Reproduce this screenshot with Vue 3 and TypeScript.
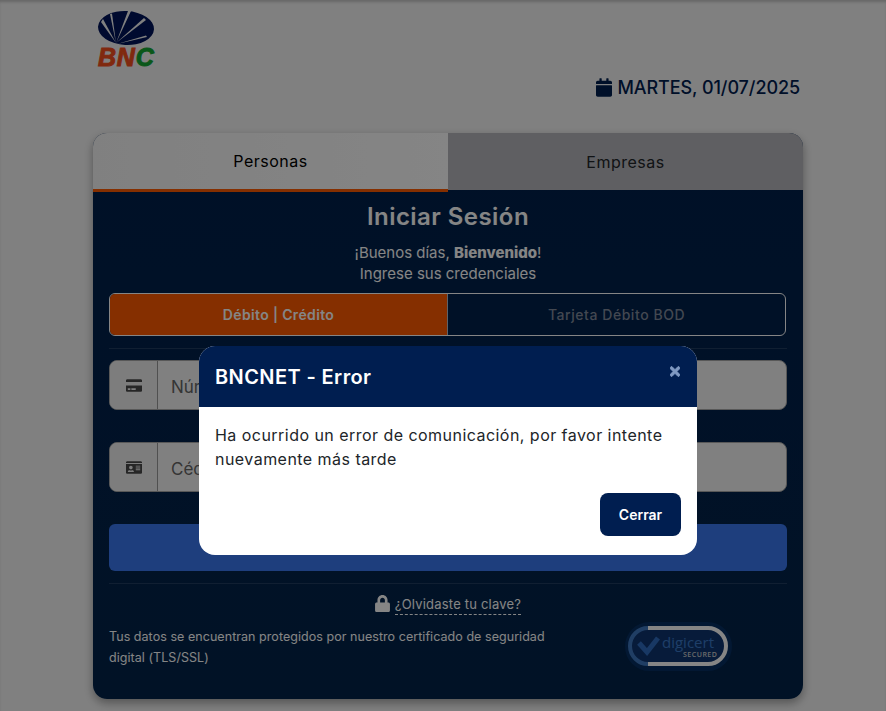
<script setup lang="ts">
const rays: string[] = [
  '18,33 3,12 5,9',
  '18,33 12,4 14,3.5',
  '18,33 30,1 33,1',
  '18,33 46,8 48,10',
  '19,34 48,25.5 49,27',
]
</script>

<template>
  <div class="page">
    <header class="top">
      <div class="logo">
        <svg class="logo-mark" width="58" height="36" viewBox="0 0 58 36">
          <ellipse cx="28" cy="18" rx="28" ry="17" fill="#00145a" transform="rotate(3 28 18)" />
          <polygon v-for="r in rays" :key="r" :points="r" fill="#f6f6f6" />
        </svg>
        <div class="logo-text"><span class="red">BN</span><span class="green">C</span></div>
      </div>
      <div class="date">
        <svg class="ico-cal" viewBox="0 0 448 512"><path d="M12 192h424c6.6 0 12 5.4 12 12v260c0 26.5-21.5 48-48 48H48c-26.5 0-48-21.5-48-48V204c0-6.6 5.4-12 12-12zm436-44v-36c0-26.5-21.5-48-48-48h-48V12c0-6.6-5.4-12-12-12h-40c-6.6 0-12 5.4-12 12v52H160V12c0-6.6-5.4-12-12-12h-40c-6.6 0-12 5.4-12 12v52H48C21.5 64 0 85.5 0 112v36c0 6.6 5.4 12 12 12h424c6.6 0 12-5.4 12-12z" /></svg>
        <span>MARTES, 01/07/2025</span>
      </div>
    </header>

    <main class="card">
      <div class="tabs">
        <div class="tab active">Personas</div>
        <div class="tab">Empresas</div>
      </div>
      <div class="card-body">
        <h1>Iniciar Sesión</h1>
        <p class="greet">¡Buenos días, <b>Bienvenido</b>!<br />Ingrese sus credenciales</p>
        <div class="segment">
          <div class="seg on">Débito | Crédito</div>
          <div class="seg">Tarjeta Débito BOD</div>
        </div>
        <hr />
        <div class="field">
          <div class="addon">
            <svg class="ico-field" viewBox="0 0 576 512"><path d="M0 432c0 26.5 21.5 48 48 48h480c26.5 0 48-21.5 48-48V256H0v176zm192-68c0-6.6 5.4-12 12-12h136c6.6 0 12 5.4 12 12v40c0 6.6-5.4 12-12 12H204c-6.6 0-12-5.4-12-12v-40zm-128 0c0-6.6 5.4-12 12-12h72c6.6 0 12 5.4 12 12v40c0 6.6-5.4 12-12 12H76c-6.6 0-12-5.4-12-12v-40zM576 80v48H0V80c0-26.5 21.5-48 48-48h480c26.5 0 48 21.5 48 48z" /></svg>
          </div>
          <div class="ph">Número de Tarjeta</div>
        </div>
        <div class="field second">
          <div class="addon">
            <svg class="ico-field" viewBox="0 0 576 512"><path d="M528 32H48C21.5 32 0 53.5 0 80v16h576V80c0-26.5-21.5-48-48-48zM0 432c0 26.5 21.5 48 48 48h480c26.5 0 48-21.5 48-48V128H0v304zm352-232c0-4.4 3.6-8 8-8h144c4.4 0 8 3.6 8 8v16c0 4.4-3.6 8-8 8H360c-4.4 0-8-3.6-8-8v-16zm0 64c0-4.4 3.6-8 8-8h144c4.4 0 8 3.6 8 8v16c0 4.4-3.6 8-8 8H360c-4.4 0-8-3.6-8-8v-16zm0 64c0-4.4 3.6-8 8-8h144c4.4 0 8 3.6 8 8v16c0 4.4-3.6 8-8 8H360c-4.4 0-8-3.6-8-8v-16zM176 192c35.3 0 64 28.7 64 64s-28.7 64-64 64-64-28.7-64-64 28.7-64 64-64zM67.1 396.2C75.5 370.5 99.6 352 128 352h8.2c12.3 5.1 25.7 8 39.8 8s27.6-2.9 39.8-8h8.2c28.4 0 52.5 18.5 60.9 44.2 3.2 9.9-5.2 19.8-15.6 19.8H82.7c-10.4 0-18.8-10-15.6-19.8z" /></svg>
          </div>
          <div class="ph">Cédula de Identidad</div>
        </div>
        <button class="submit">Entrar</button>
        <hr class="after-submit" />
        <div class="forgot">
          <svg class="ico-lock" viewBox="0 0 448 512"><path d="M400 224h-24v-72C376 68.2 307.8 0 224 0S72 68.2 72 152v72H48c-26.5 0-48 21.5-48 48v192c0 26.5 21.5 48 48 48h352c26.5 0 48-21.5 48-48V272c0-26.5-21.5-48-48-48zm-104 0H152v-72c0-39.7 32.3-72 72-72s72 32.3 72 72v72z" /></svg>
          <a>¿Olvidaste tu clave?</a>
        </div>
        <div class="foot">
          <p>Tus datos se encuentran protegidos por nuestro certificado de seguridad digital (TLS/SSL)</p>
          <svg class="digicert" width="107" height="49" viewBox="0 0 107 49">
            <rect x="0" y="0" width="107" height="49" rx="24.5" fill="#0a3a7a" opacity="0.5" />
            <path d="M23 6 H83 A18 18 0 0 1 83 42 H23" fill="#0e3570" stroke="#fff" stroke-width="4" />
            <path d="M23 6 A18 18 0 0 0 23 42" fill="#0e3570" stroke="#3f78c0" stroke-width="4" />
            <path d="M14 21 L22 30 L33 16" fill="none" stroke="#2f6cc0" stroke-width="5" />
            <text x="37" y="26" class="dc-name">digicert</text>
            <text x="58" y="35" class="dc-sec">SECURED</text>
          </svg>
        </div>
      </div>
    </main>

    <div class="backdrop"></div>
    <div class="modal-layer">
      <div class="modal">
        <div class="modal-head">
          <h2>BNCNET - Error</h2>
          <svg class="ico-close" viewBox="0 0 352 512"><path d="M242.72 256l100.07-100.07c12.28-12.28 12.28-32.19 0-44.48l-22.24-22.24c-12.28-12.28-32.19-12.28-44.48 0L176 189.28 75.93 89.21c-12.28-12.28-32.19-12.28-44.48 0L9.21 111.45c-12.28 12.28-12.28 32.19 0 44.48L109.28 256 9.21 356.07c-12.28 12.28-12.28 32.19 0 44.48l22.24 22.24c12.28 12.28 32.2 12.28 44.48 0L176 322.72l100.07 100.07c12.28 12.28 32.2 12.28 44.48 0l22.24-22.24c12.28-12.28 12.28-32.19 0-44.48L242.72 256z" /></svg>
        </div>
        <div class="modal-body">Ha ocurrido un error de comunicación, por favor intente nuevamente más tarde</div>
        <div class="modal-foot"><button class="close-btn">Cerrar</button></div>
      </div>
    </div>
  </div>
</template>

<style scoped>
.page {
  height: 711px;
  overflow: hidden;
  position: relative;
  background: #f6f6f6;
  font-family: Inter, "Open Sans", sans-serif;
  color: #212529;
  padding-left: 93px;
  box-sizing: border-box;
}

.top {
  width: 710px;
  height: 133px;
  display: flex;
  justify-content: space-between;
  align-items: flex-start;
  box-sizing: border-box;
  padding: 10px 3px 0 5px;
}

.logo { width: 58px; }
.logo-mark { display: block; }
.logo-text {
  font-family: "Liberation Sans", sans-serif;
  font-weight: 700;
  font-style: italic;
  font-size: 25px;
  line-height: 22px;
  letter-spacing: 0.8px;
  -webkit-text-stroke: 1px currentColor;
}
.red { color: #f5501e; }
.green { color: #14a832; }

.date {
  margin-top: 67px;
  display: flex;
  align-items: center;
  gap: 5px;
  font-size: 18px;
  line-height: 20px;
  font-weight: 500;
  letter-spacing: -0.08px;
  color: #002050;
}
.ico-cal { width: 16px; height: 19px; fill: #002050; }
.date span { padding-top: 1px; }

.card {
  width: 710px;
  height: 566px;
  border-radius: 14px;
  overflow: hidden;
  background: linear-gradient(#00204c, #03244a);
  box-shadow: 0 4px 10px rgba(0, 0, 0, 0.35);
}

.tabs { display: flex; height: 57px; align-items: flex-start; }
.tab {
  flex: 1;
  height: 57px;
  display: flex;
  align-items: center;
  justify-content: center;
  background: #b6b7bd;
  color: #212529;
  font-size: 16px;
  font-weight: 400;
  letter-spacing: 0.5px;
  box-sizing: border-box;
}
.tab.active {
  height: 59px;
  position: relative;
  background: linear-gradient(90deg, #f6f6f6, #fff);
  color: #000;
  border-bottom: 3px solid #ff5a00;
}

.card-body { padding: 0 16px; color: #fff; }

h1 {
  margin: 0;
  padding-top: 12px;
  font-size: 24px;
  line-height: 30px;
  font-weight: 600;
  letter-spacing: 0.45px;
  text-align: center;
}

.greet {
  margin: 10px 0 0;
  font-size: 15px;
  line-height: 21px;
  text-align: center;
  letter-spacing: 0;
}
.greet b { font-weight: 800; }

.segment {
  margin-top: 9px;
  display: flex;
  height: 43px;
  border: 1px solid #fff;
  border-radius: 6px;
  overflow: hidden;
  width: 677px;
  box-sizing: border-box;
}
.seg {
  flex: 1;
  display: flex;
  align-items: center;
  justify-content: center;
  font-size: 14px;
  font-weight: 500;
  color: #808a9c;
  letter-spacing: 0.55px;
  border-left: 1px solid rgba(255, 255, 255, 0.7);
}
.seg.on {
  background: #ff5a00;
  color: #fff;
  font-weight: 600;
  letter-spacing: 0.35px;
  border-left: 0;
}

hr {
  border: 0;
  border-top: 1px solid rgba(255, 255, 255, 0.12);
  margin: 12px 0 11px;
}

.field {
  display: flex;
  height: 50px;
  background: #f6f6f6;
  border: 1px solid #aaa;
  border-radius: 8px;
  overflow: hidden;
  box-sizing: border-box;
}
.field.second { margin-top: 32px; }
.addon {
  width: 47px;
  flex: none;
  background: #f0f0f0;
  border-right: 1px solid #999;
  display: flex;
  align-items: center;
  justify-content: center;
}
.ico-field { width: 16px; height: 15px; fill: #4a4a4a; }
.ph {
  padding: 3px 0 0 13px;
  display: flex;
  align-items: center;
  font-size: 17px;
  color: #666;
}

.submit {
  display: block;
  margin-top: 32px;
  width: 100%;
  height: 47px;
  border: 0;
  border-radius: 6px;
  background: #3a78f0;
  color: #fff;
  font: inherit;
  font-size: 15px;
  font-weight: 600;
}
.after-submit { margin: 12px 0 0; }

.forgot {
  margin-top: 10px;
  display: flex;
  justify-content: center;
  align-items: center;
  gap: 5px;
  height: 20px;
  font-size: 13px;
}
.ico-lock { width: 15px; height: 17px; fill: #fff; margin-top: -2px; }
.forgot a {
  color: #fff;
  border-bottom: 1px dashed #fff;
  line-height: 20px;
  letter-spacing: 0.2px;
}

.foot {
  margin-top: 8px;
  display: flex;
  align-items: flex-start;
  justify-content: space-between;
  height: 60px;
}
.foot p {
  margin: 4px 0 0;
  width: 460px;
  font-size: 12.5px;
  line-height: 21px;
  letter-spacing: 0.05px;
}
.digicert { margin: 0 55px 0 0; flex: none; }
.dc-name { font-family: "Open Sans", sans-serif; font-size: 15px; fill: #3a78c8; }
.dc-sec { font-family: "Open Sans", sans-serif; font-size: 7px; font-weight: 600; fill: #ccc; letter-spacing: 0.5px; }

.backdrop {
  position: absolute;
  inset: 0;
  background: rgba(0, 0, 0, 0.48);
  box-shadow: inset 0 3px 3px -1px rgba(0, 0, 0, 0.2);
}

.modal-layer {
  position: absolute;
  left: 199px;
  top: 346px;
}
.modal {
  width: 498px;
  height: 209px;
  background: #fff;
  border-radius: 16px;
  overflow: hidden;
}
.modal-head {
  height: 61px;
  background: #001e50;
  color: #fff;
  display: flex;
  align-items: center;
  justify-content: space-between;
  padding: 0 16px;
}
h2 {
  margin: 0;
  font-size: 20px;
  font-weight: 600;
  letter-spacing: 0.4px;
}
.ico-close {
  width: 10px;
  height: 15px;
  fill: #7f99c2;
  stroke: #7f99c2;
  stroke-width: 30;
  margin: -11px 1px 0 0;
}
.modal-body {
  padding: 16px 16px 0;
  font-size: 16px;
  line-height: 24px;
  height: 62px;
  color: #212529;
  letter-spacing: 0.46px;
}
.modal-foot {
  display: flex;
  justify-content: flex-end;
  padding: 8px 16px 0;
}
.close-btn {
  width: 81px;
  height: 43px;
  border: 0;
  border-radius: 8px;
  background: #001e50;
  color: #fff;
  font: inherit;
  font-size: 14px;
  font-weight: 600;
}
</style>
